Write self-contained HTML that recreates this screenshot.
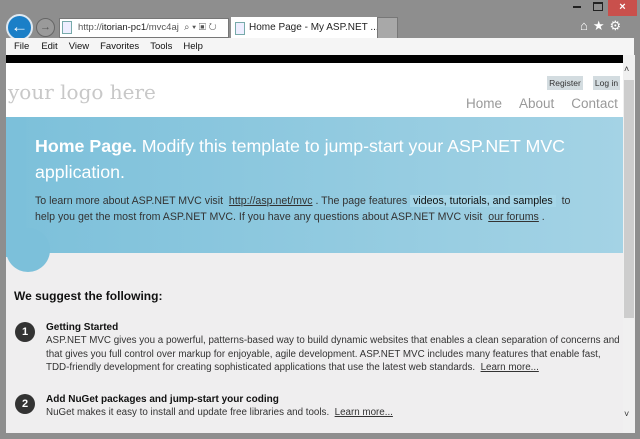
<!DOCTYPE html>
<html><head><meta charset="utf-8"><style>
*{margin:0;padding:0;box-sizing:border-box}
body{width:640px;height:439px;overflow:hidden;background:#8e8e8e;font-family:"Liberation Sans",sans-serif;position:relative}
.a{position:absolute}
.hero{left:6px;top:117px;width:617px;height:136px;background:linear-gradient(90deg,#7cc0da,#a4d3e5)}
.p{font-size:9.8px;color:#333;line-height:13.6px;white-space:nowrap}
u{color:#333}
</style></head><body>
<div class="a" style="left:573px;top:6px;width:8px;height:2px;background:#222"></div>
<div class="a" style="left:593px;top:2px;width:10px;height:9px;border:1px solid #222;border-top-width:2px"></div>
<div class="a" style="left:608px;top:0;width:29px;height:16px;background:#c9504c;color:#fff;font-size:11px;text-align:center;line-height:15px;font-weight:bold">×</div>
<div class="a" style="left:6px;top:14px;width:27px;height:27px;border-radius:50%;background:#1b7fc7;border:2px solid #dfe9f2;color:#fff;font-size:17px;font-weight:bold;text-align:center;line-height:22px">←</div>
<div class="a" style="left:36px;top:18px;width:19px;height:19px;border-radius:50%;border:1px solid #666;background:#9a9a9a;color:#555;font-size:11px;text-align:center;line-height:17px">→</div>
<div class="a" style="left:59px;top:18px;width:170px;height:20px;background:#fff;border:1px solid #777;font-size:9.5px;color:#555;line-height:18px;padding-left:18px;white-space:nowrap;overflow:hidden">http://<b style="font-weight:normal;color:#222">itorian-pc1</b>/mvc4aj &nbsp;⌕ ▾ ▣ ↻</div>
<div class="a" style="left:62px;top:21px;width:10px;height:13px;border:1px solid #7aa;background:#eef"></div>
<div class="a" style="left:231px;top:17px;width:146px;height:22px;background:#fff;font-size:10px;color:#222;line-height:22px;padding-left:18px;white-space:nowrap">Home Page - My ASP.NET ... <span style="color:#888">&nbsp;×</span></div>
<div class="a" style="left:235px;top:22px;width:10px;height:13px;border:1px solid #7aa;background:#eef"></div>
<div class="a" style="left:377px;top:17px;width:21px;height:22px;background:#a8a8a8;border:1px solid #777"></div>
<div class="a" style="left:580px;top:18px;color:#fff;font-size:13px;letter-spacing:5px">⌂★⚙</div>
<div class="a" style="left:6px;top:38px;width:628px;height:17px;background:#f5f5f5;font-size:9.5px;color:#111;line-height:17px;white-space:nowrap">
<span style="margin-left:8px">File</span><span style="margin-left:12px">Edit</span><span style="margin-left:11px">View</span><span style="margin-left:11px">Favorites</span><span style="margin-left:11px">Tools</span><span style="margin-left:11px">Help</span></div>
<div class="a" style="left:6px;top:55px;width:617px;height:8px;background:#000"></div>
<div class="a" style="left:623px;top:55px;width:12px;height:378px;background:#f0f0f0"></div>
<div class="a" style="left:624px;top:80px;width:10px;height:238px;background:#cdcdcd"></div>
<div class="a" style="left:624px;top:64px;font-size:9px;color:#333">˄</div>
<div class="a" style="left:624px;top:409px;font-size:9px;color:#333">˅</div>
<div class="a" style="left:6px;top:63px;width:617px;height:54px;background:#fff"></div>
<div class="a" style="left:8px;top:80px;font-family:'DejaVu Serif',serif;font-size:20px;color:#c8c8c8;white-space:nowrap">your logo here</div>
<div class="a" style="left:547px;top:76px;width:36px;height:14px;background:#d3dce0;font-size:8.5px;color:#333;text-align:center;line-height:14px">Register</div>
<div class="a" style="left:593px;top:76px;width:27px;height:14px;background:#d3dce0;font-size:8.5px;color:#333;text-align:center;line-height:14px">Log in</div>
<div class="a" style="left:466px;top:96px;font-size:13.5px;color:#999;white-space:nowrap">Home<span style="margin-left:17px">About</span><span style="margin-left:17px">Contact</span></div>
<div class="a" style="left:6px;top:253px;width:617px;height:180px;background:#efeeef"></div>
<div class="a hero"></div>
<div class="a" style="left:6px;top:228px;width:44px;height:44px;border-radius:50%;background:#7cc0da"></div>
<div class="a" style="left:6px;top:117px;width:20px;height:140px;background:#7cc0da"></div>
<div class="a" style="left:35px;top:133px;font-size:17.8px;color:#fff;line-height:26px;white-space:nowrap"><b>Home Page.</b> Modify this template to jump-start your ASP.NET MVC<br>application.</div>
<div class="a" style="left:35px;top:193px;font-size:10.6px;line-height:16px;color:#333;white-space:nowrap">To learn more about ASP.NET MVC visit &nbsp;<u>http://asp.net/mvc</u> . The page features <span style="background:#a5d6e8;padding:0 3px;color:#111">videos, tutorials, and samples</span> &nbsp;to<br>help you get the most from ASP.NET MVC. If you have any questions about ASP.NET MVC visit &nbsp;<u>our forums</u> .</div>
<div class="a" style="left:14px;top:289px;font-size:12px;font-weight:bold;color:#111">We suggest the following:</div>
<div class="a" style="left:15px;top:322px;width:20px;height:20px;border-radius:50%;background:#333;color:#fff;font-size:11px;font-weight:bold;text-align:center;line-height:20px">1</div>
<div class="a" style="left:46px;top:322px;font-size:10px;font-weight:bold;color:#111">Getting Started</div>
<div class="a p" style="left:46px;top:334px">ASP.NET MVC gives you a powerful, patterns-based way to build dynamic websites that enables a clean separation of concerns and<br>that gives you full control over markup for enjoyable, agile development. ASP.NET MVC includes many features that enable fast,<br>TDD-friendly development for creating sophisticated applications that use the latest web standards. &nbsp;<u>Learn more...</u></div>
<div class="a" style="left:15px;top:394px;width:20px;height:20px;border-radius:50%;background:#333;color:#fff;font-size:11px;font-weight:bold;text-align:center;line-height:20px">2</div>
<div class="a" style="left:46px;top:394px;font-size:10px;font-weight:bold;color:#111">Add NuGet packages and jump-start your coding</div>
<div class="a p" style="left:46px;top:406px">NuGet makes it easy to install and update free libraries and tools. &nbsp;<u>Learn more...</u></div>
</body></html>
